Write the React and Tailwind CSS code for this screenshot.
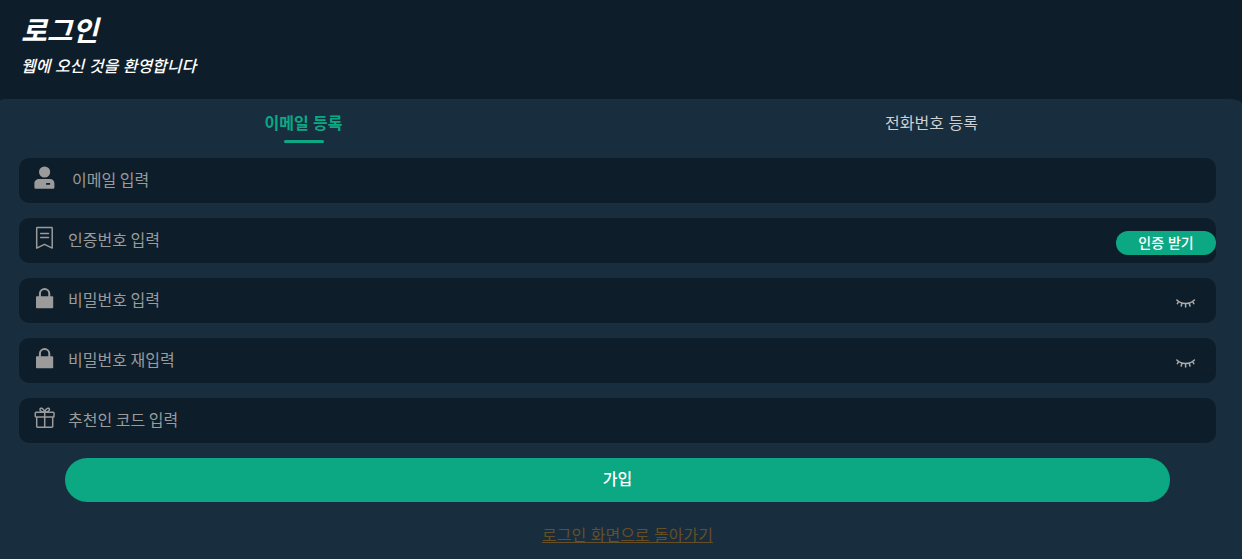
import { useState } from "react";

function ManagerIcon() {
  return (
    <svg width="22" height="24" viewBox="0 0 22 24" fill="currentColor" aria-hidden="true">
      <circle cx="10.600" cy="6" r="5.600" />
      <path
        fillRule="evenodd"
        d="M5.200 13h10.800c2.600 0 4.400 1.800 4.400 4.400v3.800c0 1-.6 1.600-1.600 1.600H2c-1 0-1.600-.6-1.600-1.600v-3.800c0-2.600 2.200-4.400 4.800-4.400zM12.600 16.900a.6.6 0 0 0-.6.6v.7a.6.6 0 0 0 .6.6h3a.6.6 0 0 0 .6-.6v-.7a.6.6 0 0 0-.6-.6z"
      />
    </svg>
  );
}

function LabelIcon() {
  return (
    <svg width="22" height="24" viewBox="0 0 22 24" fill="none" stroke="currentColor" strokeWidth="1.500" strokeLinejoin="round" strokeLinecap="round" aria-hidden="true">
      <path d="M3.300 1.500h14.300a.6.6 0 0 1 .6.6v20L10.500 18.300l-7.800 3.800V2.100a.6.6 0 0 1 .6-.6z" />
      <path d="M6.700 7.500h7.800M6.700 11.500h7.800" />
    </svg>
  );
}

function LockIcon() {
  return (
    <svg width="22" height="24" viewBox="0 0 22 24" aria-hidden="true">
      <path d="M5.900 11V7.700a4.700 4.700 0 0 1 9.400 0V11" fill="none" stroke="currentColor" strokeWidth="2" />
      <rect x="2" y="10.200" width="17.200" height="12" rx="0.800" fill="currentColor" />
    </svg>
  );
}

function GiftIcon() {
  return (
    <svg width="22" height="24" viewBox="0 0 22 24" fill="none" stroke="currentColor" strokeWidth="1.500" strokeLinejoin="round" aria-hidden="true">
      <rect x="1.300" y="6.300" width="18.700" height="4.700" rx="0.800" />
      <path d="M2.700 11v9.400a.8.800 0 0 0 .8.800h14.400a.8.800 0 0 0 .8-.8V11M10.700 6.500v14.600" />
      <path d="M10.700 6.100C8 6.100 5.700 5 6 3.100c.4-1.700 3.700-1.300 4.700 3zM10.700 6.100c2.700 0 5-1.100 4.700-3-.4-1.700-3.700-1.300-4.700 3z" />
    </svg>
  );
}

function ClosedEyeIcon() {
  return (
    <svg width="20" height="10" viewBox="0 0 20 10" fill="none" stroke="currentColor" strokeWidth="1.500" strokeLinecap="round" aria-hidden="true">
      <path d="M.8 1c4.600 4.600 13 4.600 17.600 0M2.600 2.500L1.400 4.700M6 4.200L5.200 7M9.600 4.600v3.300M13.200 4.200l.8 2.800M16.600 2.500L17.800 4.700" />
    </svg>
  );
}

function Field({ id, label, icon, type = "text", wide = false, children }) {
  return (
    <div className="flex h-[45px] items-center rounded-[10px] bg-[#0d1e2a] pl-[15px]">
      <label htmlFor={id} className="mb-1.5 shrink-0 text-[#9b9b9b]">
        {icon}
      </label>
      <input
        id={id}
        type={type}
        aria-label={label}
        placeholder={label}
        className={`h-full min-w-0 flex-1 bg-transparent pb-1 font-['Noto_Sans_CJK_KR',sans-serif] text-base text-gray-200 outline-none placeholder:text-[#9b9b9b] ${wide ? "ml-4" : "ml-3"}`}
      />
      {children}
    </div>
  );
}

function PasswordField({ id, label }) {
  const [shown, setShown] = useState(false);
  return (
    <Field id={id} label={label} icon={<LockIcon />} type={shown ? "text" : "password"}>
      <button
        type="button"
        aria-label={label}
        aria-pressed={shown}
        onClick={() => setShown(!shown)}
        className="mt-1.5 shrink-0 cursor-pointer px-5 py-2 text-[#ababab]"
      >
        <ClosedEyeIcon />
      </button>
    </Field>
  );
}

export default function App() {
  return (
    <main className="flex min-h-screen flex-col bg-[#0d1e2a] font-['Liberation_Sans','Noto_Sans_CJK_KR',sans-serif] text-base text-white">
      <header className="px-[21px] pt-2.5 pb-[19px] italic">
        <h1 className="text-[28px] leading-[44px] font-bold">로그인</h1>
        <p className="leading-[26px] font-medium">웹에 오신 것을 환영합니다</p>
      </header>

      <section className="flex-1 rounded-tl-[6px_2px] rounded-tr-[14px_5px] bg-[#182d3e]">
        <div className="grid h-[59px] grid-cols-2">
          <button type="button" className="flex cursor-pointer flex-col items-center pt-[13px] pr-[14px] font-bold text-[#0ca884]">
            이메일 등록
            <span className="mt-1 h-[3px] w-10 rounded-full bg-[#0ca884]" />
          </button>
          <button type="button" className="flex cursor-pointer flex-col items-center pt-[13px] text-[#d0d0d0]">
            전화번호 등록
          </button>
        </div>

        <form className="flex flex-col gap-[15px] pr-[26px] pl-[19px]" onSubmit={(e) => e.preventDefault()}>
          <Field id="email" label="이메일 입력" icon={<ManagerIcon />} wide />
          <Field id="code" label="인증번호 입력" icon={<LabelIcon />}>
            <button
              type="button"
              className="mt-[5px] h-6 w-[100px] shrink-0 cursor-pointer rounded-full bg-[#0ca884] text-sm leading-6 font-medium"
            >
              인증 받기
            </button>
          </Field>
          <PasswordField id="password" label="비밀번호 입력" />
          <PasswordField id="password-again" label="비밀번호 재입력" />
          <Field id="referral" label="추천인 코드 입력" icon={<GiftIcon />} />
          <button type="submit" className="mx-[46px] h-11 cursor-pointer rounded-full bg-[#0ca884] font-medium">
            가입
          </button>
        </form>

        <div className="pt-[22px] pl-[13px] text-center">
          <a href="#login" className="text-[#664f27] underline">
            로그인 화면으로 돌아가기
          </a>
        </div>
      </section>
    </main>
  );
}
